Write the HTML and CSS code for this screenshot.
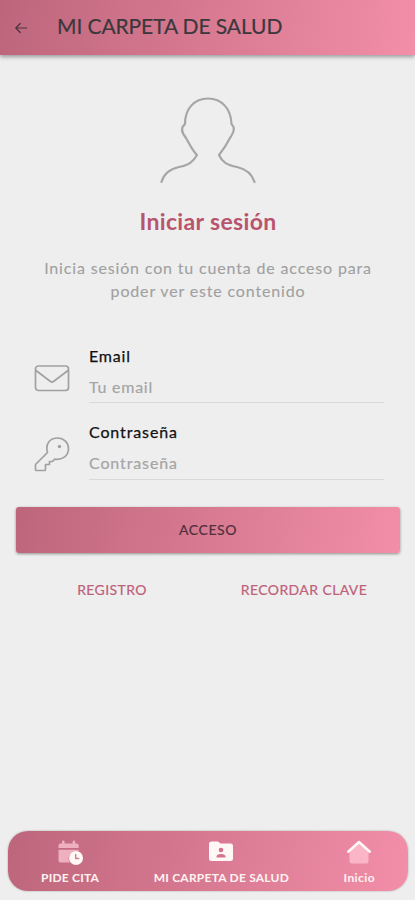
FILE: index.html
```html
<!DOCTYPE html>
<html lang="es">
<head>
<meta charset="utf-8">
<title>Mi carpeta de salud</title>
<link rel="stylesheet" href="styles.css">
</head>
<body>
<header class="topbar">
  <svg class="back" viewBox="0 0 12 12"><path d="M11.5 6H1M5.3 1.5L.8 6l4.5 4.5"/></svg>
  <h1 class="topbar-title">MI CARPETA DE SALUD</h1>
</header>
<main class="content">
  <svg class="avatar" viewBox="0 0 96 88"><path d="M1.500 86C4 77 10 73 19 71C29 69 33 66 37 59C32 54 29 47 26 42C23 38 21 35 22.500 31L25 28C25 13 34 2.500 48 2.500S71 13 71.500 28L73.500 31C75 35 72 39 70 42C67 48 63 54 59 59C62 66 67 69 77 71C86 73 92 78 94.500 86"/></svg>
  <h2 class="heading">Iniciar sesión</h2>
  <p class="intro">Inicia sesión con tu cuenta de acceso para<br>poder ver este contenido</p>
  <form class="form">
    <div class="field">
      <svg class="field-icon" viewBox="0 0 36 36"><rect x="1.500" y="6" width="33" height="24.500" rx="3"/><path d="M2 10.500l14.500 11q1.500 1.100 3 0L34 10.500"/></svg>
      <label class="field-body"><span class="label">Email</span><input class="input" type="email" placeholder="Tu email"></label>
    </div>
    <div class="field">
      <svg class="field-icon" viewBox="0 0 36 36"><path d="M13.500 16.500C11 8 16 2 23.500 2C30 2 34.500 7 34.500 12.500C34.500 20 28 24.500 20.500 23.200L18.500 25.500H15.500V28.500H11.500V33.500Q11.500 34.500 10.500 34.500H2.500Q1.500 34.500 1.500 33.500V28.500Z"/><circle class="dot" cx="25.500" cy="10.500" r="1.700"/></svg>
      <label class="field-body"><span class="label">Contraseña</span><input class="input" type="password" placeholder="Contraseña"></label>
    </div>
    <button class="submit" type="button">ACCESO</button>
  </form>
  <div class="links"><a>REGISTRO</a><a>RECORDAR CLAVE</a></div>
</main>
<nav class="tabs">
  <a class="tab">
    <svg class="tab-icon" viewBox="0 0 26 26"><path class="soft" d="M1.500 8V5.500q0-2 2-2H5V1.800q0-1.300 1.300-1.300T7.600 1.800V3.500h8V1.800q0-1.300 1.300-1.300t1.300 1.300V3.500h1.500q2 0 2 2V8zM1.500 9.700h20.200v1.300a8 8 0 0 0-9 11.500H3.500q-2 0-2-2z"/><circle class="solid" cx="19" cy="18" r="7"/><path class="hand" d="M18.700 14.500v4h3"/></svg>
    <span>PIDE CITA</span>
  </a>
  <a class="tab">
    <svg class="tab-icon" viewBox="0 0 26 26"><path class="solid" d="M3.500 1.500H10l2.500 2H22.500q2.500 0 2.500 2.500V18.500q0 2.500-2.500 2.500H3.500Q1 21 1 18.500V4Q1 1.500 3.500 1.500z"/><circle class="cut" cx="13" cy="10" r="2.300"/><path class="cut" d="M8.500 17.500v-.8q0-2.700 4.500-2.700t4.500 2.700v.8z"/></svg>
    <span>MI CARPETA DE SALUD</span>
  </a>
  <a class="tab tab-inicio">
    <svg class="tab-icon" viewBox="0 0 26 26"><path class="soft house" d="M13 2.500l9.500 8.500V21.500q0 2-2 2h-15q-2 0-2-2V11z"/><path class="roof" d="M2.200 11.700L13 2l10.800 9.700"/></svg>
    <span>Inicio</span>
  </a>
</nav>
</body>
</html>
```
FILE: styles.css
```css
* { box-sizing: border-box; }
body {
  margin: 0;
  height: 900px;
  display: flex;
  flex-direction: column;
  background: #eee;
  font-family: Lato, "Liberation Sans", sans-serif;
  overflow: hidden;
}
svg { display: block; fill: none; stroke-linecap: round; stroke-linejoin: round; }
.topbar, .submit, .tabs { background: linear-gradient(100deg, #bd667b, #f38ea8); }
.topbar {
  flex: none;
  height: 55px;
  padding: 0 15px;
  display: flex;
  align-items: center;
  gap: 30px;
  box-shadow: 0 2px 4px rgba(0, 0, 0, .35);
}
.back { width: 12px; height: 12px; stroke: #49353e; stroke-width: 1.2; }
.topbar-title { margin: 0; padding-bottom: 3px; font-size: 21px; font-weight: 400; line-height: 28px; letter-spacing: -.1px; color: #3b383c; white-space: nowrap; -webkit-text-stroke: .2px; }
.content { flex: 1; padding: 41px 15px 0 16px; }
.avatar { width: 96px; height: 88px; margin: 0 auto; stroke: #a6a6a6; stroke-width: 2.2; }
.heading { margin: 21px 0 0; text-align: center; font-size: 23px; line-height: 32px; font-weight: 700; letter-spacing: .35px; color: #b9546f; }
.intro { margin: 19px 0 0; text-align: center; font-size: 16px; line-height: 23px; letter-spacing: .84px; color: #a0a0a0; white-space: nowrap; -webkit-text-stroke: .1px; }
.form { margin-top: 44px; }
.field { display: flex; height: 76px; padding: 0 16px 0 18px; gap: 19px; }
.field + .field { height: 78px; }
.field-icon { width: 36px; height: 36px; margin-top: 14px; flex: none; stroke: #a1a1a1; stroke-width: 1.7; }
.field-body { flex: 1; min-width: 0; }
.dot { fill: #a1a1a1; stroke: none; }
.label { display: block; font-size: 16px; line-height: 20px; letter-spacing: .8px; color: #111; -webkit-text-stroke: .25px; }
.input { display: block; width: 100%; height: 37px; padding: 5px 0 0; border: 0; border-bottom: 1px solid #d9d9d9; background: transparent; font: 16px Lato, sans-serif; letter-spacing: .75px; outline: 0; }
.field + .field .label, .field + .field .input { letter-spacing: .88px; }
.field + .field .input { height: 38px; padding-top: 4px; }
.input::placeholder { color: #a5a5a5; opacity: 1; -webkit-text-stroke: .2px; }
.submit { display: block; width: 100%; height: 46px; margin-top: 7px; padding: 0 0 2px; border: 0; border-radius: 3px; box-shadow: 0 1px 3px rgba(0, 0, 0, .4); color: #4e303c; font: 14px Lato, sans-serif; letter-spacing: .6px; -webkit-text-stroke: .2px; }
.links { display: grid; grid-template-columns: 1fr 1fr; margin-top: 27px; text-align: center; font-size: 14px; line-height: 20px; letter-spacing: .4px; color: #bf6079; -webkit-text-stroke: .2px; }
.tabs { flex: none; display: flex; justify-content: space-between; height: 60px; margin: 0 7px 9px 8px; padding: 9px 33px 0 33px; border-radius: 20px; box-shadow: 0 0 2px rgba(0, 0, 0, .35); color: #fff3f2; font-size: 12px; font-weight: 700; line-height: 16px; letter-spacing: .23px; }
.tab { display: flex; flex-direction: column; align-items: center; gap: 4px; white-space: nowrap; }
.tab-icon { width: 26px; height: 26px; }
.tab-inicio { letter-spacing: .4px; }
.soft { fill: #eeb0bf; }
.house { fill: #fab6c7; }
.solid { fill: #fff8f4; }
.cut { fill: #d6738c; }
.hand { stroke: #d08095; stroke-width: 1.5; }
.roof { stroke: #fff8f4; stroke-width: 2.500; }
```
